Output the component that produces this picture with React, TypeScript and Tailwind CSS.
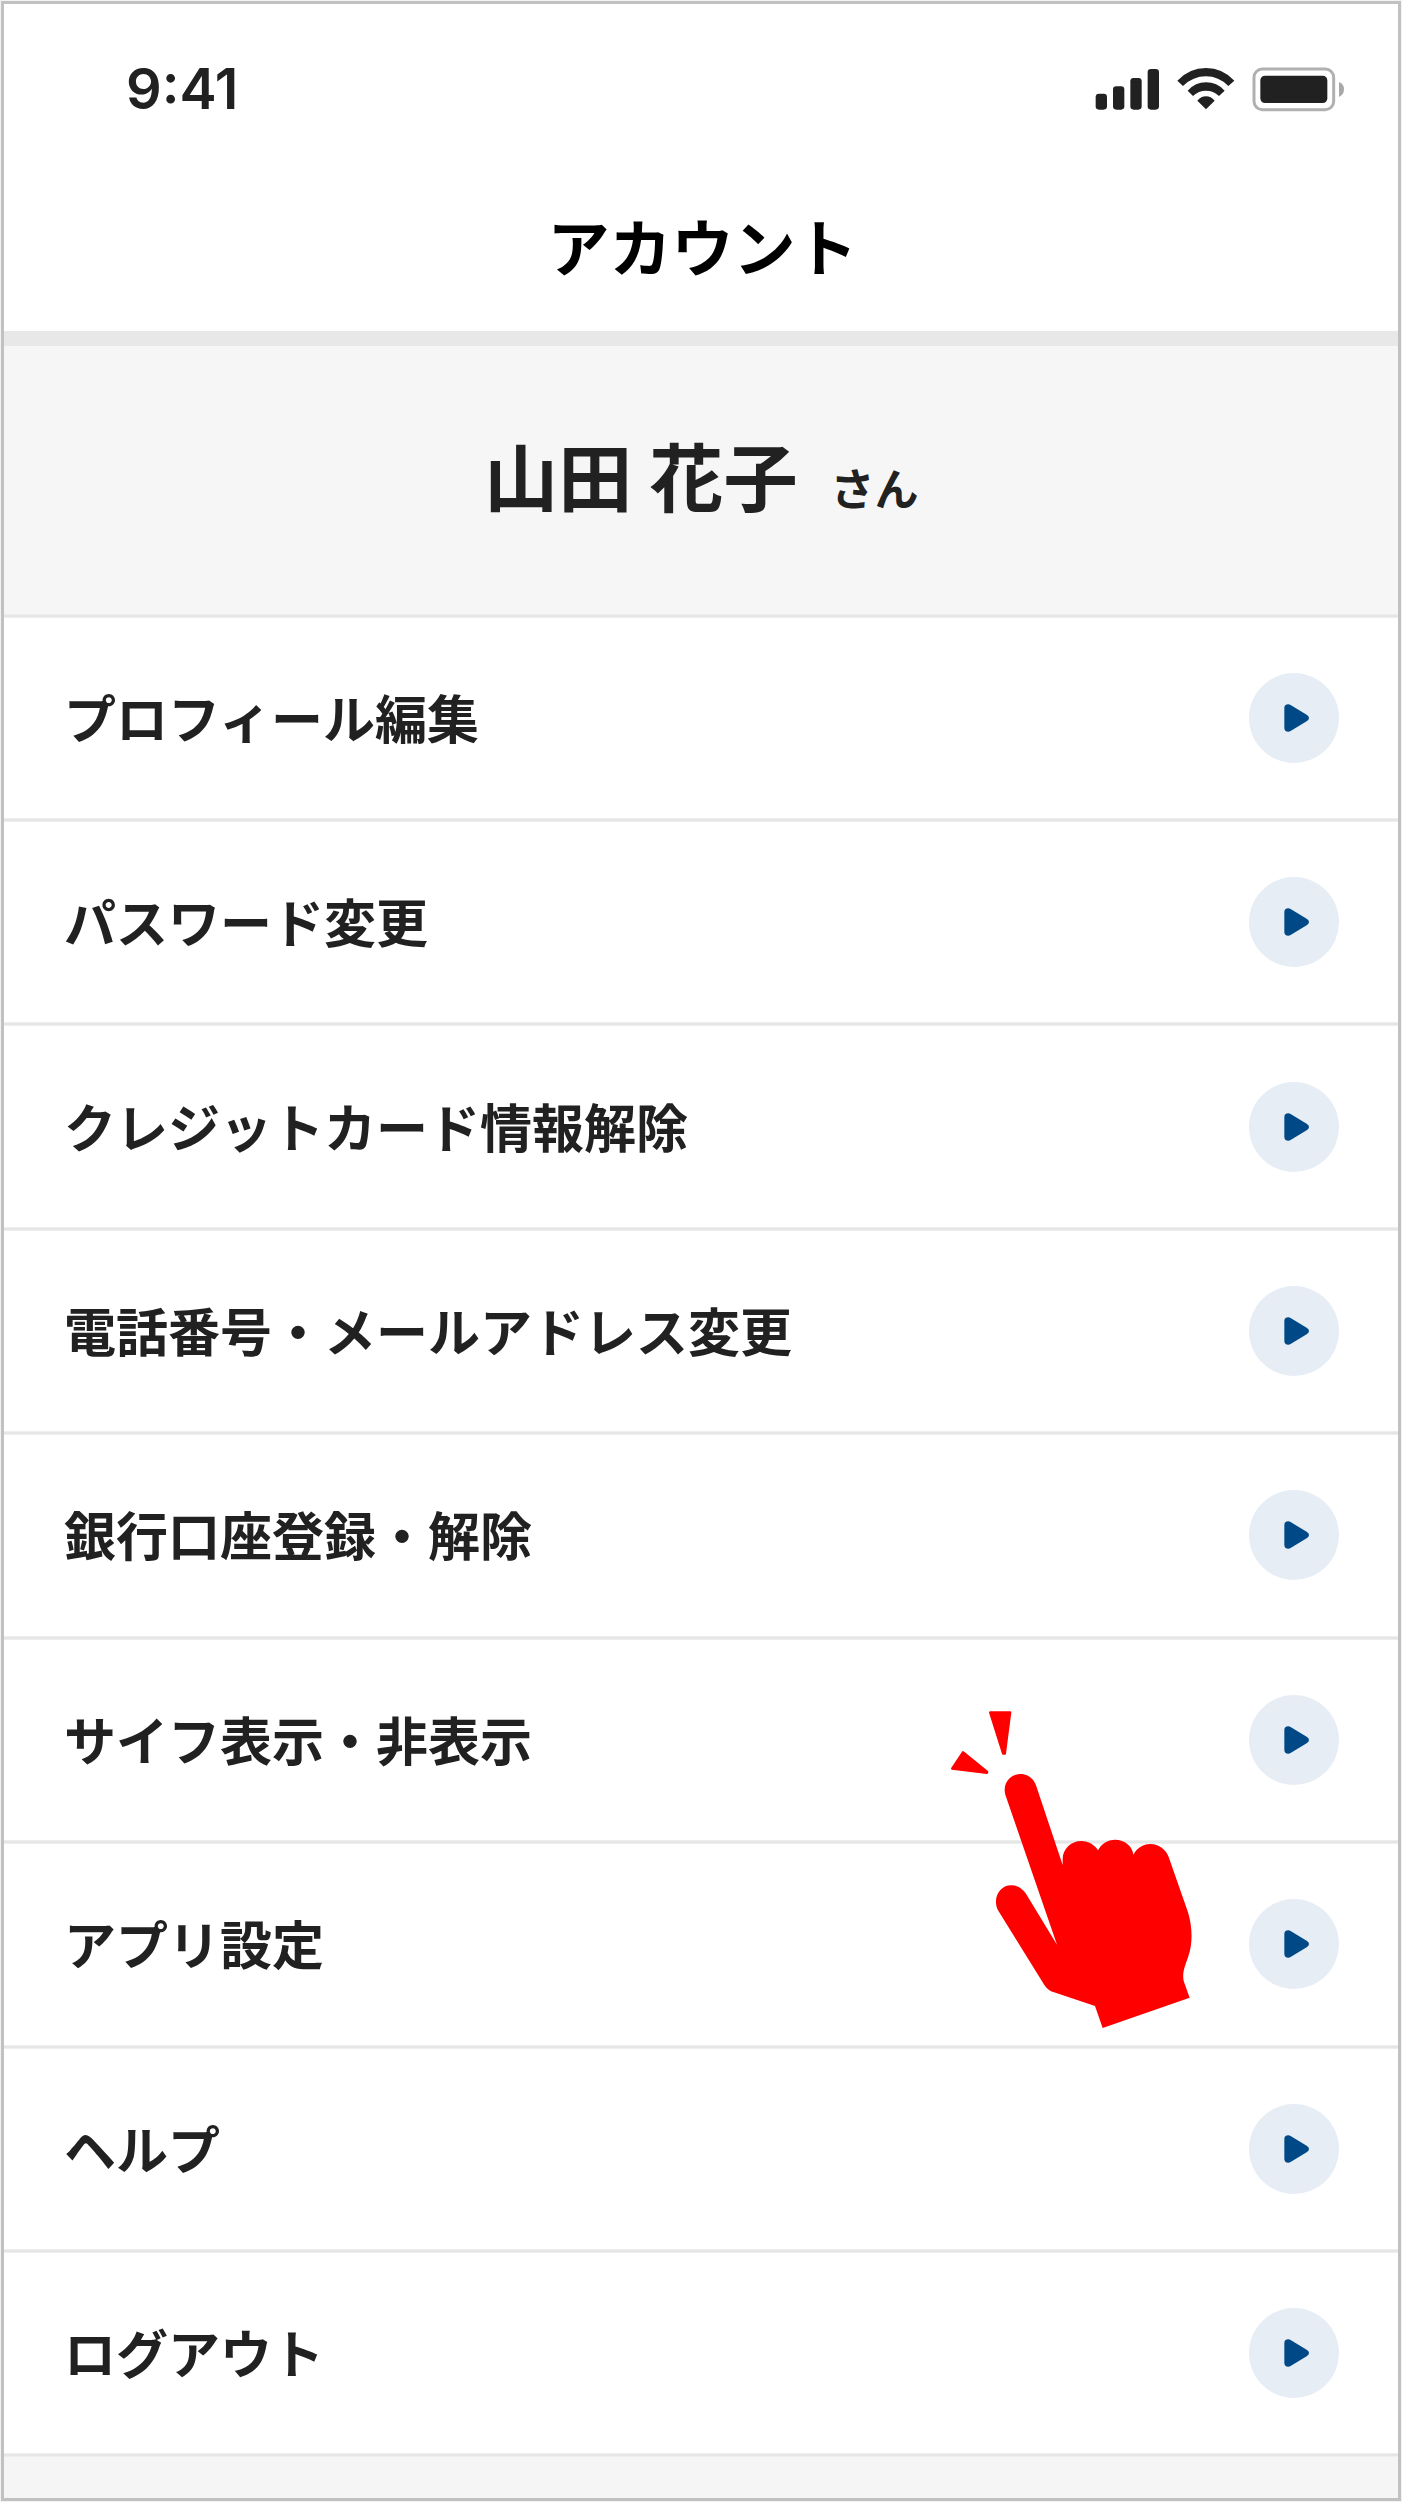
const items = [
  'プロフィール編集',
  'パスワード変更',
  'クレジットカード情報解除',
  '電話番号・メールアドレス変更',
  '銀行口座登録・解除',
  'サイフ表示・非表示',
  'アプリ設定',
  'ヘルプ',
  'ログアウト',
];

function StatusIcons() {
  return (
    <svg className="block h-[100px] w-[332px]" viewBox="0 0 996 300" fill="#212121">
      <rect x="77" y="161" width="34" height="48" rx="10" />
      <rect x="129" y="139" width="34" height="70" rx="10" />
      <rect x="181" y="114" width="34" height="95" rx="10" />
      <rect x="233" y="87" width="34" height="122" rx="10" />
      <path d="M322 122 Q358 84 408 84 Q458 84 493 122 L475 138 Q446 109 408 109 Q369 109 339 138 Z" />
      <path d="M353 152 Q376 127 408 127 Q441 127 464 152 L447 168 Q430 152 408 152 Q386 152 369 168 Z" />
      <path d="M382 182 Q393 169 408 169 Q423 169 434 182 L408 208 Z" />
      <rect x="552" y="87" width="239" height="122" rx="25" fill="none" stroke="#b0b0b0" strokeWidth="9" />
      <rect x="571" y="107" width="201" height="82" rx="14" />
      <path d="M807 126 Q822 132 822 148 Q822 164 807 171 Z" fill="#a8a8a8" />
    </svg>
  );
}

function PlayBadge() {
  return (
    <span className="flex h-[90px] w-[90px] items-center justify-center rounded-full bg-[#e6edf5]">
      <svg className="block h-[90px] w-[90px]" viewBox="0 0 270 270">
        <path
          d="M106 105 Q106 94 118 94 Q121 94 126 97 L173 125 Q180 129 180 135 Q180 141 173 145 L126 173 Q121 176 118 176 Q106 176 106 165 Z"
          fill="#004986"
        />
      </svg>
    </span>
  );
}

function Divider() {
  return <div className="h-[4px] shrink-0 border-y border-[#eeeeee] bg-[#e6e6e6]" />;
}

function TapHand() {
  return (
    <svg
      className="pointer-events-none absolute top-[1680px] left-[920px] h-[370px] w-[300px]"
      viewBox="0 0 900 1110"
      fill="#ff0000"
    >
      <path d="M210 97 H271 L255 221 H249 Z" stroke="#ff0000" strokeWidth="6" strokeLinejoin="round" />
      <path d="M129 216 L202 275 L201 279 L96 266 Z" stroke="#ff0000" strokeWidth="6" strokeLinejoin="round" />
      <path d="M256 344 C247 311 269 282 302 282 C323 282 341 296 348 316 L428 555 V537 C428 507 453 483 484 483 C505 483 524 494 534 511 C543 492 563 479 585 479 C614 479 638 499 640 524 C650 505 669 492 691 492 C717 492 738 509 746 531 L804 697 C817 741 819 788 805 829 C795 859 786 877 791 903 L809 953 L548 1044 L525 978 L402 937 C389 933 380 926 373 915 L234 691 C217 657 237 616 274 616 C292 616 306 624 317 640 L411 794 Z" />
    </svg>
  );
}

export default function App() {
  return (
    <div className="relative h-[2502px] w-[1402px] overflow-hidden bg-[#f2f2f2] p-px font-['Noto_Sans_CJK_JP',sans-serif] text-[#212121]">
      <div className="flex h-[2500px] w-[1400px] flex-col overflow-hidden border-3 border-[#c1c1c1] bg-[#f5f5f5]">
        <header className="h-[327px] shrink-0 bg-white">
          <div className="flex h-[172px] justify-between">
            <time className="mt-[57px] ml-[122px] block h-[56px] font-['Inter'] text-[55.8px] leading-[56px] font-semibold">
              9:41
            </time>
            <div className="mt-[36px] -mr-[4px]">
              <StatusIcons />
            </div>
          </div>
          <h1 className="h-[138px] pl-[3px] text-center text-[62px] leading-[138px] font-bold text-black">アカウント</h1>
        </header>
        <div className="h-[15px] shrink-0 bg-[#e8e8e8]" />
        <section className="flex h-[267.5px] shrink-0 items-baseline bg-[#f6f6f6] pt-[73px] pl-[480px] font-bold">
          <span className="text-[74.2px] leading-[110px] whitespace-pre">山田 花子</span>
          <span className="ml-[33px] text-[44px]">さん</span>
        </section>
        <Divider />
        <ul className="shrink-0">
          {items.map((item) => (
            <li key={item} className="flex h-[204.45px] flex-col bg-white">
              <div className="flex min-h-0 flex-1 items-center justify-between pr-[59px] pl-[60px]">
                <span className="pb-[2px] text-[52px] leading-[76px] font-bold">{item}</span>
                <PlayBadge />
              </div>
              <Divider />
            </li>
          ))}
        </ul>
      </div>
      <TapHand />
    </div>
  );
}
